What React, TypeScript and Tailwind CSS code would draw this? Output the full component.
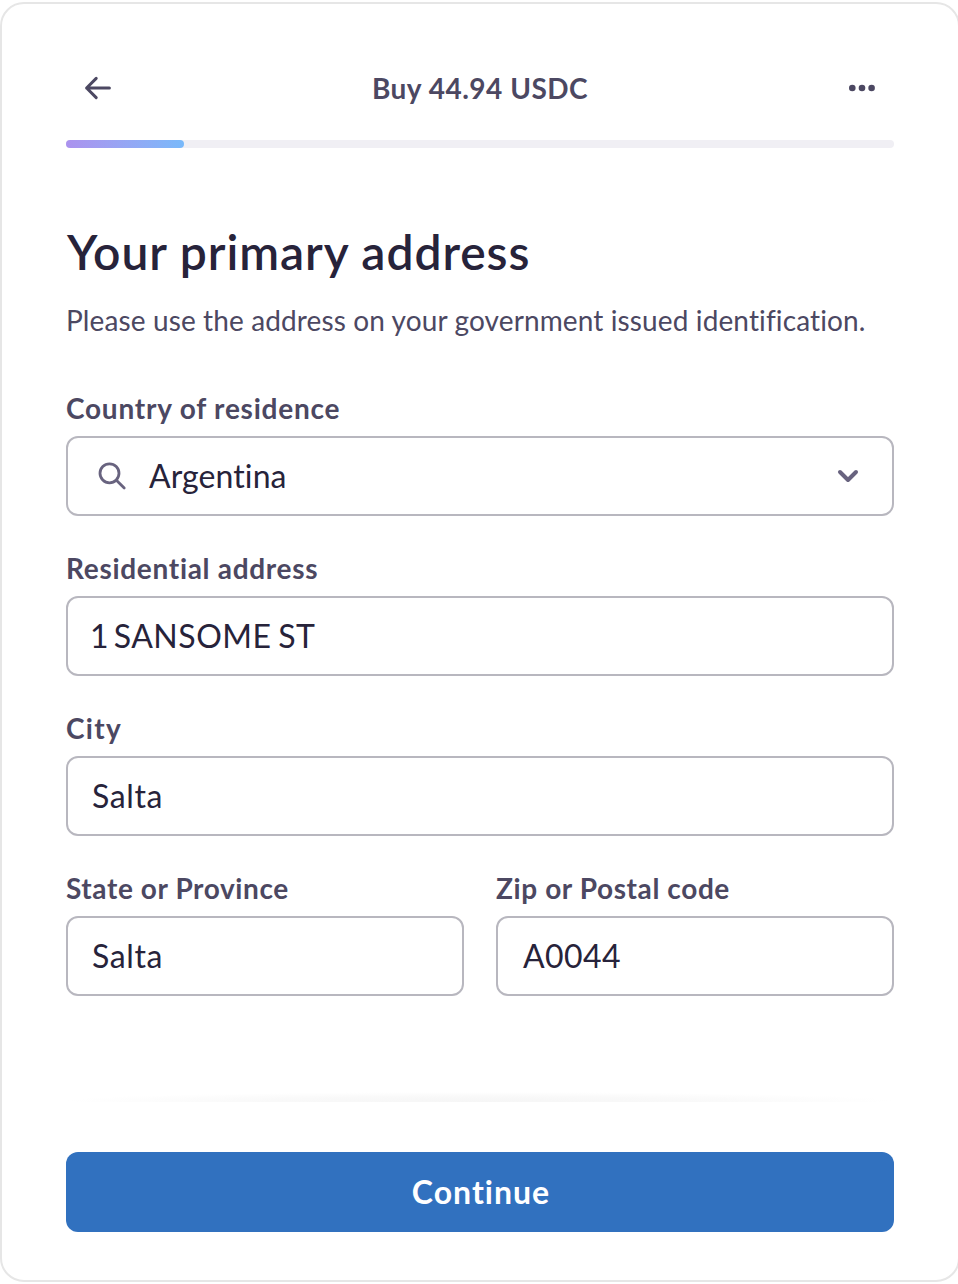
import type { ReactNode } from "react";

const labelClass = "block h-10 pt-px text-[28px] leading-10 font-bold text-[#4c4862]";
const boxClass =
  "mt-[9px] flex h-20 w-full items-center rounded-[12px] border-2 border-[#b8b7bf] bg-white text-[32px] text-[#27233a]";

function Field({ label, tracking, className, children }: { label: string; tracking: string; className?: string; children: ReactNode }) {
  return (
    <div className={className}>
      <label className={`${labelClass} ${tracking}`}>{label}</label>
      <div className={boxClass}>{children}</div>
    </div>
  );
}

export default function App() {
  return (
    <div className="h-[1284px] w-full overflow-hidden bg-white pt-[2px] font-['Lato','Liberation_Sans',sans-serif] [font-variant-ligatures:none]">
      <main className="flex h-[1280px] w-[960px] flex-col rounded-[24px] border-2 border-[#e6e6e6] bg-white px-16">
        <header className="mt-[60px] flex h-12 items-center justify-between">
          <button aria-label="Back" className="flex h-12 w-16 items-center justify-center">
            <svg width="28" height="24" viewBox="0 0 28 24" fill="none" stroke="#4c4862" strokeWidth="3" strokeLinecap="round" strokeLinejoin="round">
              <path d="M25.4 12H2.6M12.2 2.4L2.6 12l9.6 9.6" />
            </svg>
          </button>
          <h2 className="text-[28px] leading-10 font-bold tracking-[0.5px] text-[#4c4862]">Buy 44.94 USDC</h2>
          <button aria-label="More options" className="flex h-12 w-16 items-center justify-center">
            <svg width="28" height="8" viewBox="0 0 28 8" fill="#4c4862">
              <circle cx="4.3" cy="4" r="3.3" />
              <circle cx="14" cy="4" r="3.3" />
              <circle cx="23.6" cy="4" r="3.3" />
            </svg>
          </button>
        </header>

        <div className="mt-7 h-2 shrink-0 rounded-full bg-[#f0eff4]">
          <div className="h-2 w-[118px] rounded-full bg-linear-to-r from-[#ab92ee] to-[#78b9fa]" />
        </div>

        <h1 className="mt-[76px] ml-px h-14 text-[48px] leading-[56px] font-semibold tracking-[0.92px] text-[#27233a]">
          Your primary address
        </h1>
        <p className="mt-5 h-10 whitespace-nowrap text-[28px] leading-10 tracking-[0.12px] text-[#4c4862]">
          Please use the address on your government issued identification.
        </p>

        <Field label="Country of residence" tracking="tracking-[0.78px]" className="mt-[47px]">
          <svg className="ml-7 shrink-0" width="32" height="32" viewBox="0 0 32 32" fill="none" stroke="#68637f" strokeWidth="2.8" strokeLinecap="round">
            <circle cx="13.5" cy="13.3" r="9.5" />
            <path d="M20.4 20.2L28.2 28" />
          </svg>
          <span className="ml-[21px] flex-1 tracking-[0.1px]">Argentina</span>
          <svg className="mr-[32px]" width="24" height="16" viewBox="0 0 24 16" fill="none" stroke="#68637f" strokeWidth="4" strokeLinecap="round" strokeLinejoin="round">
            <path d="M4 4l8 8 8-8" />
          </svg>
        </Field>
        <Field label="Residential address" tracking="tracking-[0.7px]" className="mt-[31px]">
          <span className="pl-[22px] tracking-[0.5px] [word-spacing:-2px]">
            <span className="[word-spacing:-4px]">1 </span>SANSOME ST
          </span>
        </Field>
        <Field label="City" tracking="tracking-[1.3px]" className="mt-[31px]">
          <span className="pl-6 tracking-[0.6px]">Salta</span>
        </Field>
        <div className="mt-[31px] grid grid-cols-2 gap-8">
          <Field label="State or Province" tracking="tracking-[0.6px]">
            <span className="pl-6 tracking-[0.6px]">Salta</span>
          </Field>
          <Field label="Zip or Postal code" tracking="tracking-[0.6px]">
            <span className="pl-[25px] tracking-[0.41px]">A0044</span>
          </Field>
        </div>

        <div className="mt-[96px] h-[10px] shrink-0 overflow-hidden">
          <div className="h-[18px] bg-[radial-gradient(50%_50%_at_50%_50%,#f6f6f6_0%,#f9f9f9_50%,#ffffff_100%)]" />
        </div>

        <button className="mt-[50px] h-20 shrink-0 rounded-[12px] bg-[#3171bf] pl-0.5 text-[32px] font-bold tracking-[1px] text-white">
          Continue
        </button>
      </main>
    </div>
  );
}
